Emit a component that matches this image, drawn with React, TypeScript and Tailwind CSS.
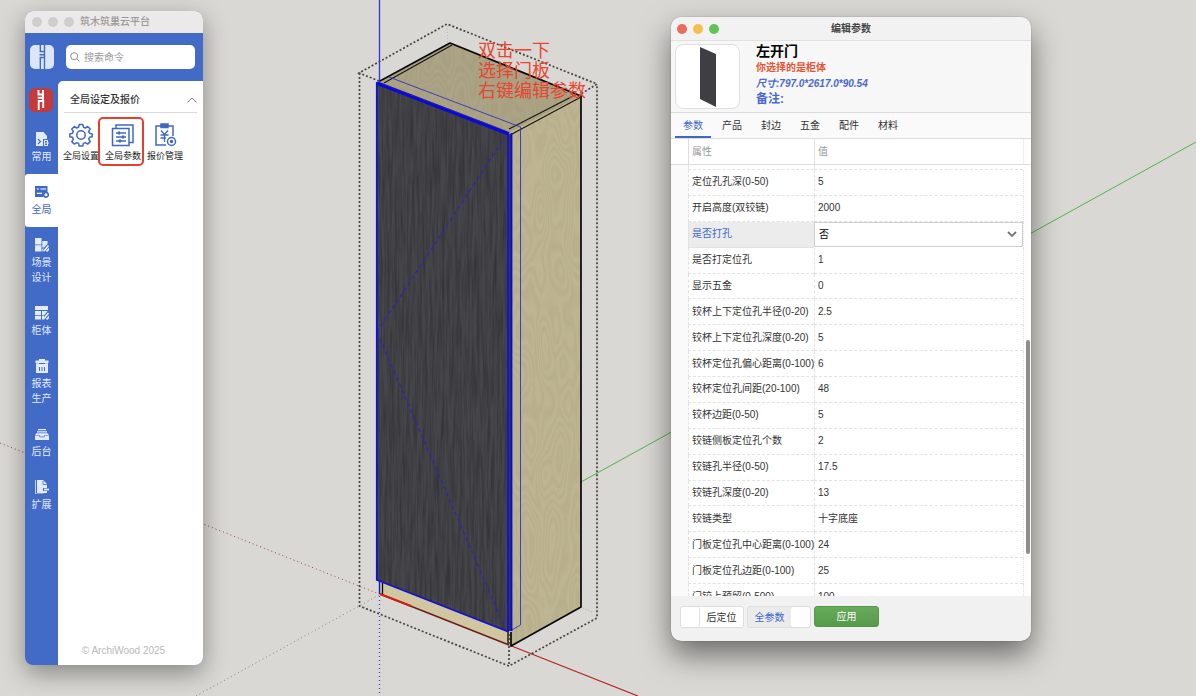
import type { ReactNode } from "react";

const FONT = "font-['Liberation_Sans','Noto_Sans_CJK_SC',sans-serif]";

function Scene() {
  return (
    <svg
      className="absolute inset-0 h-full w-full"
      viewBox="0 0 1196 696"
      preserveAspectRatio="xMinYMin slice"
      fill="none"
      aria-hidden="true"
    >
      <defs>
        <filter id="doorGrain" x="0" y="0" width="1" height="1" colorInterpolationFilters="sRGB">
          <feTurbulence type="fractalNoise" baseFrequency="0.4 0.02" numOctaves="3" seed="4" />
          <feColorMatrix values="0 0 0 0 0.12  0 0 0 0 0.12  0 0 0 0 0.14  0.9 0 0 0 -0.3" />
        </filter>
        <filter id="woodGrain" x="0" y="0" width="1" height="1" colorInterpolationFilters="sRGB">
          <feTurbulence type="fractalNoise" baseFrequency="0.035 0.011" numOctaves="2" seed="9" />
          <feComponentTransfer>
            <feFuncR type="table" tableValues="0 1 0 1 0 1 0 1 0 1 0 1 0 1 0 1 0 1 0 1 0 1 0 1 0 1 0 1 0" />
          </feComponentTransfer>
          <feColorMatrix values="0 0 0 0 0.5  0 0 0 0 0.45  0 0 0 0 0.3  0.11 0 0 0 0" />
        </filter>
        <clipPath id="doorClip">
          <path d="M377 83 509 133V632L377 580Z" />
        </clipPath>
        <clipPath id="woodClip">
          <path d="M380 82 450 43 581 96V607L511 646 509 133Z" />
        </clipPath>
      </defs>

      <path d="M379.500 0V82" stroke="#3232f0" strokeWidth="1.300" />
      <path d="M379.500 596V696" stroke="#4444d0" strokeWidth="1.300" strokeDasharray="1 3" />
      <path d="M1196 142 581 482" stroke="#4cb748" />
      <path d="M196 696 379 595" stroke="#7c8f62" strokeDasharray="1 3" />
      <path d="M0 443 379 594" stroke="#a03a3a" strokeDasharray="1 3" />
      <path d="M509 645 638 696" stroke="#b3241c" strokeWidth="1.200" />

      <path d="M380 582V594L511 646V632Z" fill="#d0c6a0" />
      <path d="M380 82 450 43 581 96 509 133Z" fill="#aca486" />
      <path d="M509 133 581 96V607L511 646Z" fill="#beb593" />
      <g clipPath="url(#woodClip)">
        <rect x="380" y="43" width="201" height="604" filter="url(#woodGrain)" />
      </g>
      <path d="M377 83 509 133V632L377 580Z" fill="#464549" />
      <g clipPath="url(#doorClip)">
        <rect x="377" y="83" width="132" height="549" filter="url(#doorGrain)" />
      </g>

      <path d="M380 81 450 43 581 96V607L511 646V632" stroke="#080808" strokeWidth="1.700" strokeLinejoin="round" />
      <path d="M384 83 452 45M509 129 577 94M512 134 581 97" stroke="#151510" strokeWidth="1.100" />
      <path d="M382.500 583V594M508 632V645" stroke="#080808" strokeWidth="1.300" />
      <path d="M380 594 509 645" stroke="#6d1b14" strokeWidth="1.400" />
      <path d="M380 594 411 606" stroke="#d01c14" strokeWidth="2" />
      <path d="M379.500 581V594" stroke="#1414e0" strokeWidth="1.400" />

      <path d="M389 77 520.500 127V625L510 631" stroke="#3030c8" strokeWidth="0.900" />
      <path d="M377 332 505 137M377 332 505 628" stroke="#2a22c4" strokeWidth="1.200" strokeDasharray="4 3" />
      <path d="M377 83 509 134" stroke="#0a0ad8" strokeWidth="3.500" />
      <path d="M383 84 506 131" stroke="#30307c" strokeWidth="1" strokeDasharray="2 1" />
      <path d="M376.800 82V580L509 632" stroke="#1010dc" strokeWidth="1.800" />
      <path d="M510 134V631" stroke="#30306a" strokeWidth="3" />
      <path d="M508 133V631" stroke="#1010d8" strokeWidth="1.600" />
      <path d="M511.500 133V631" stroke="#0a0ad0" strokeWidth="1.800" />

      <g stroke="#45443f" strokeWidth="1.700" strokeDasharray="2 2">
        <path d="M379 81 359 73 447 24 597 84 581 94" />
        <path d="M359.500 73V606L509 666 597 618V84" />
        <path d="M509 634V666" />
      </g>
      <path d="M447.500 26V43" stroke="#b5b3ad" strokeWidth="0.800" strokeDasharray="1 2" />
      <path d="M583 608 592 612" stroke="#9fb09a" strokeWidth="0.800" strokeDasharray="1 2" />
    </svg>
  );
}

function WhiteMark() {
  return (
    <svg className="size-6" viewBox="0 0 24 24" fill="none" aria-hidden="true">
      <rect width="24" height="24" rx="5" fill="#dce6fa" />
      <path d="M10.300 0V6.500H14.500V0M14.500 6V12.500M9.500 9.700H14.500M10.300 24V12.500H14.500V24" stroke="#426ac7" strokeWidth="1.400" />
    </svg>
  );
}

function RedMark() {
  return (
    <svg className="size-6" viewBox="0 0 24 24" fill="none" aria-hidden="true">
      <rect width="24" height="24" rx="6" fill="#c63a3c" />
      <path d="M9.500 2V6.500H14V2M14 6V13M8.700 9.700H14M9.700 22V13H14.200V20" stroke="#fff" strokeWidth="1.900" />
    </svg>
  );
}

const sideIcons: Record<string, ReactNode> = {
  common: (
    <>
      <path d="M1 0H8.500L12 4V7H8V14H1Z" fill="currentColor" />
      <path d="M3 7 5.500 9.500 3 12" stroke="#426ac7" strokeWidth="1.100" />
      <path d="M9.500 8V14M9.500 8.500H12.500M9.500 11H14M9.500 13.500H12.500M12.500 8V14" stroke="currentColor" />
    </>
  ),
  global: (
    <>
      <path d="M0 1H12.500V7H9L8 12H0Z" fill="currentColor" />
      <path d="M1.800 4H3.800M5.500 4H11M1.800 8.300H7" stroke="#fff" strokeWidth="1.200" />
      <circle cx="11" cy="9.800" r="2.300" stroke="currentColor" strokeWidth="1.600" fill="#fff" />
    </>
  ),
  scene: (
    <>
      <path d="M0 0H6.500V6.500H0ZM0 7.200H6.500V13.500H0ZM7.300 3H12.500V6L9 9.500H7.300ZM7.300 13.500V10.500H8.500V13.500Z" fill="currentColor" />
      <path d="M9 13 13.500 7.500M11.500 13.500 14.500 10.500" stroke="currentColor" strokeWidth="1.800" />
    </>
  ),
  cabinet: (
    <>
      <path d="M0 0H13V4H0ZM0 5H6V9H0ZM0 9.800H6V13.500H0ZM7 5H12.500L9.500 9H7ZM7 13.500V9.800L9 9.500V13.500Z" fill="currentColor" />
      <path d="M8.500 13 13.500 7M11.500 13.500 14.500 10.500" stroke="currentColor" strokeWidth="1.800" />
    </>
  ),
  report: (
    <>
      <path d="M4 0H10V1.500H13.500V4H.500V1.500H4ZM1 4.300H13V14H1Z" fill="currentColor" />
      <path d="M4 4.500H10M4.500 8V12M7 8V12M9.500 8V12" stroke="#426ac7" strokeWidth="1" />
    </>
  ),
  backend: (
    <path
      d="M3 2H11V3.200H3ZM2 4.200H12V5.400H2ZM1.500 6.300H12.500L14 8H9.500L9 9.500H5L4.500 8H0ZM0 8.500H4L4.700 10.300H9.300L10 8.500H14V13H0Z"
      fill="currentColor"
    />
  ),
  extend: (
    <>
      <path d="M2 0H8L12 4V8H8V11H12V13H2Z" fill="currentColor" />
      <path d="M.500 0V14H9" stroke="currentColor" strokeWidth=".800" />
      <path d="M8 1V4.500H12" stroke="#426ac7" strokeWidth=".800" />
      <path d="M9 9.500H14.500" stroke="currentColor" strokeWidth="1.800" />
    </>
  ),
};

const sideItems = [
  { id: "common", lines: ["常用"] },
  { id: "global", lines: ["全局"], active: true },
  { id: "scene", lines: ["场景", "设计"] },
  { id: "cabinet", lines: ["柜体"] },
  { id: "report", lines: ["报表", "生产"] },
  { id: "backend", lines: ["后台"] },
  { id: "extend", lines: ["扩展"] },
];

function GearIcon() {
  return (
    <svg className="size-6" viewBox="0 0 24 24" fill="none" stroke="#3f68c5" strokeWidth="1.500" strokeLinejoin="round" aria-hidden="true">
      <path d="M10.200 1.500h3.600l.6 2.700 1.900.8 2.400-1.500 2.500 2.500-1.500 2.400.8 1.900 2.700.6v2.800l-2.700.6-.8 1.900 1.500 2.400-2.500 2.500-2.400-1.500-1.900.8-.6 2.700h-3.600l-.6-2.700-1.900-.8-2.400 1.500-2.500-2.500 1.500-2.400-.8-1.900-2.700-.6v-2.800l2.700-.6.8-1.900-1.500-2.400 2.500-2.500 2.400 1.500 1.900-.8z" />
      <circle cx="12" cy="12" r="4.200" />
    </svg>
  );
}

function SlidersIcon() {
  return (
    <svg className="size-6" viewBox="0 0 24 24" fill="none" stroke="#3f68c5" strokeWidth="1.500" aria-hidden="true">
      <path d="M1.500 5.500H18V22.500H1.500ZM5 5V2H22V19.500H18.500" />
      <path d="M5 10H15M5 14H15M5 18H15" />
      <path d="M8 8.500V11.500M12 12.500V15.500M9 16.500V19.500" strokeWidth="2.200" />
    </svg>
  );
}

function QuoteIcon() {
  return (
    <svg className="size-6" viewBox="0 0 24 24" fill="none" stroke="#3f68c5" strokeWidth="1.500" aria-hidden="true">
      <path d="M13 22H3V3H20V13" />
      <path d="M8 1H15V4.500H8Z" fill="#3f68c5" />
      <path d="M8 7.500 11.500 11.500 15 7.500M7.500 12H15.500M7.500 15H13M11.500 11.500V19" strokeWidth="1.300" />
      <circle cx="18.500" cy="18.500" r="4" fill="#fff" />
      <circle cx="18.500" cy="18.500" r="1" fill="#3f68c5" />
    </svg>
  );
}

const tools = [
  { label: "全局设置", icon: <GearIcon /> },
  { label: "全局参数", icon: <SlidersIcon />, marked: true },
  { label: "报价管理", icon: <QuoteIcon /> },
];

function PlatformWindow() {
  return (
    <section className="absolute top-[11px] left-[25px] flex h-[654px] w-[178px] flex-col overflow-hidden rounded-lg bg-[#426ac7] shadow-[0_8px_24px_rgba(0,0,0,0.38)]">
      <header className="flex h-[22px] shrink-0 items-center gap-[6px] bg-[#ebe9e9] px-[7px]">
        <span className="size-[10px] rounded-full bg-[#cfcdcd]" />
        <span className="size-[10px] rounded-full bg-[#cfcdcd]" />
        <span className="size-[10px] rounded-full bg-[#cfcdcd]" />
        <h1 className="text-[10px] leading-4 font-medium text-[#9b9999]">筑木筑巢云平台</h1>
      </header>
      <div className="flex h-12 shrink-0 items-center pr-2">
        <div className="flex w-[33px] shrink-0 justify-center">
          <WhiteMark />
        </div>
        <label className="ml-2 flex h-6 min-w-0 flex-1 items-center gap-1 rounded-[5px] bg-white px-1">
          <svg className="size-[10px] shrink-0" viewBox="0 0 10 10" fill="none" stroke="#8c8c8c" aria-hidden="true">
            <circle cx="4.200" cy="4.200" r="3.500" />
            <path d="m6.800 6.800 2.700 2.700" />
          </svg>
          <input
            type="text"
            aria-label="搜索命令"
            placeholder="搜索命令"
            className="min-w-0 flex-1 bg-transparent pt-[2px] text-[10px] leading-4 outline-none placeholder:text-[#9a9a9a]"
          />
        </label>
      </div>
      <div className="flex min-h-0 flex-1">
        <nav className="flex w-[33px] shrink-0 flex-col text-[#e3ecff]">
          <button type="button" aria-label="ArchiWood" className="flex h-10 items-start justify-center pt-[7px] pr-[2px]">
            <RedMark />
          </button>
          {sideItems.map((item) => (
            <button
              key={item.id}
              type="button"
              className={
                item.active
                  ? "flex flex-col items-center gap-[3px] rounded-l-[3px] bg-white pt-[11px] pb-[10px] text-[#3f68c5]"
                  : "flex flex-col items-center gap-[3px] pt-[11px] pb-[10px]"
              }
            >
              <svg className="size-[14px]" viewBox="0 0 14 14" fill="none" aria-hidden="true">
                {sideIcons[item.id]}
              </svg>
              <span className="flex flex-col text-[10px] leading-[15px]">
                {item.lines.map((line) => (
                  <span key={line}>{line}</span>
                ))}
              </span>
            </button>
          ))}
        </nav>
        <div className="flex min-w-0 flex-1 flex-col rounded-tl-[5px] bg-white">
          <button type="button" className="mx-[6px] flex h-8 items-center justify-between border-b border-[#d9d9d9] pt-[6px] pl-[6px] text-[#333]">
            <span className="text-[10px] leading-4 font-medium">全局设定及报价</span>
            <svg className="h-[6px] w-[10px]" viewBox="0 0 10 6" fill="none" stroke="#777" aria-hidden="true">
              <path d="m.500 5.500 4.500-4.500 4.500 4.500" />
            </svg>
          </button>
          <div className="flex px-[2px] pt-[10px]">
            {tools.map((tool) => (
              <button key={tool.label} type="button" className="relative flex w-[42px] flex-col items-center gap-[3px]">
                {tool.icon}
                <span className="text-[9px] leading-3 whitespace-nowrap text-[#222]">{tool.label}</span>
                {tool.marked && (
                  <span className="absolute -top-[6px] right-0 -left-1 h-[49px] rounded-[5px] border-2 border-[#e6402d]" />
                )}
              </button>
            ))}
          </div>
          <footer className="mt-auto pr-[14px] pb-[6px] text-center text-[10px] leading-4 text-[#b9b9b9]">
            © ArchiWood 2025
          </footer>
        </div>
      </div>
    </section>
  );
}

const rows: { name: string; value: string; select?: boolean }[] = [
  { name: "定位孔孔深(0-50)", value: "5" },
  { name: "开启高度(双铰链)", value: "2000" },
  { name: "是否打孔", value: "否", select: true },
  { name: "是否打定位孔", value: "1" },
  { name: "显示五金", value: "0" },
  { name: "铰杯上下定位孔半径(0-20)", value: "2.5" },
  { name: "铰杯上下定位孔深度(0-20)", value: "5" },
  { name: "铰杯定位孔偏心距离(0-100)", value: "6" },
  { name: "铰杯定位孔间距(20-100)", value: "48" },
  { name: "铰杯边距(0-50)", value: "5" },
  { name: "铰链侧板定位孔个数", value: "2" },
  { name: "铰链孔半径(0-50)", value: "17.5" },
  { name: "铰链孔深度(0-20)", value: "13" },
  { name: "铰链类型", value: "十字底座" },
  { name: "门板定位孔中心距离(0-100)", value: "24" },
  { name: "门板定位孔边距(0-100)", value: "25" },
  { name: "门铰上预留(0-500)", value: "100" },
];

const tabs = ["参数", "产品", "封边", "五金", "配件", "材料"];

function ParameterRow({ name, value, select }: { name: string; value: string; select?: boolean }) {
  return (
    <tr>
      <td className="bg-[#fafafa] p-0" />
      <th
        scope="row"
        className={
          select
            ? "border-b border-l border-[#e2e2e2] bg-[#ececec] py-0 pr-0 pl-[3px] text-left font-normal whitespace-nowrap text-[#4068c8]"
            : "border-b border-l border-dashed border-[#e2e2e2] py-0 pr-0 pl-[3px] text-left font-normal whitespace-nowrap"
        }
      >
        {name}
      </th>
      {select ? (
        <td className="p-0">
          <div className="relative">
            <select
              aria-label={name}
              defaultValue={value}
              className="block h-[25px] w-full appearance-none border border-[#cfcfcf] bg-white pl-1 text-black"
            >
              <option>否</option>
              <option>是</option>
            </select>
            <svg className="pointer-events-none absolute top-[9px] right-[6px] h-[7px] w-[10px]" viewBox="0 0 10 7" fill="none" stroke="#777" strokeWidth="1.800" aria-hidden="true">
              <path d="m1 1 4 4 4-4" />
            </svg>
          </div>
        </td>
      ) : (
        <td className="border-b border-l border-dashed border-[#e2e2e2] py-0 pl-[3px]">{value}</td>
      )}
      <td className="border-l border-dotted border-[#e2e2e2] p-0" />
    </tr>
  );
}

function ParameterWindow() {
  return (
    <section className="absolute top-[17px] left-[671px] flex h-[624px] w-[360px] flex-col overflow-hidden rounded-[10px] bg-[#f1f1f1] text-[10px] text-[#333] shadow-[0_0_1px_rgba(0,0,0,0.6),0_14px_30px_rgba(0,0,0,0.5)]">
      <header className="flex h-6 shrink-0 items-center border-b border-[#e1e1e1] bg-[#f3f2f2] px-[6px]">
        <div className="flex flex-1 gap-[6px]">
          <button type="button" aria-label="关闭" className="size-[10px] rounded-full bg-[#ec6a5e]" />
          <button type="button" aria-label="最小化" className="size-[10px] rounded-full bg-[#f4bf4f]" />
          <button type="button" aria-label="缩放" className="size-[10px] rounded-full bg-[#61c554]" />
        </div>
        <h2 className="leading-4 font-bold text-[#444]">编辑参数</h2>
        <div className="flex-1" />
      </header>
      <div className="flex h-[72px] shrink-0 gap-4 border-b border-[#dcdcdc] bg-[#f7f7f7] px-1 pt-[3px]">
        <div className="flex size-[65px] items-center justify-center rounded-[8px] border border-[#e0e0e0] bg-white">
          <svg className="h-[60px] w-4" viewBox="0 0 16 60" aria-hidden="true">
            <path d="M0 0 16 7V60L0 52Z" fill="#3f3e43" />
          </svg>
        </div>
        <div className="flex flex-col font-bold">
          <h3 className="text-[14px] leading-[15px] text-black">左开门</h3>
          <p className="leading-[18px] text-[#ea5230]">你选择的是柜体</p>
          <p className="leading-[14px] text-[#4a69cc] italic">尺寸:797.0*2617.0*90.54</p>
          <p className="text-[12px] leading-[17px] text-[#4a69cc]">备注:</p>
        </div>
      </div>
      <div role="tablist" className="flex h-[26px] shrink-0 gap-[3px] border-b border-[#dcdcdc] bg-[#fafafa] px-1">
        {tabs.map((tab, i) => (
          <button
            key={tab}
            type="button"
            role="tab"
            aria-selected={i === 0}
            className={
              i === 0
                ? "w-9 border-b-2 border-[#4068c0] pt-[2px] text-[#4068c8]"
                : "w-9 border-b-2 border-transparent pt-[2px]"
            }
          >
            {tab}
          </button>
        ))}
      </div>
      <div className="relative min-h-0 flex-1 overflow-hidden bg-white">
        <table className="h-[471px] w-full table-fixed border-separate border-spacing-0 leading-6">
          <colgroup>
            <col className="w-[17px]" />
            <col className="w-[126px]" />
            <col />
            <col className="w-[8px]" />
          </colgroup>
          <thead>
            <tr className="h-[26px] text-left text-[#999]">
              <td className="border-b border-[#dcdcdc] p-0" />
              <th scope="col" className="border-b border-l border-[#dcdcdc] py-0 pl-[3px] font-normal">属性</th>
              <th scope="col" className="border-b border-l border-[#e2e2e2] border-b-[#dcdcdc] py-0 pl-[3px] font-normal">值</th>
              <td className="border-b border-l border-[#eeeeee] border-b-[#dcdcdc] p-0" />
            </tr>
            <tr className="h-[5px]">
              <td className="h-[5px] bg-[#fafafa] p-0" />
              <td className="h-[5px] border-b border-l border-dashed border-[#e2e2e2] p-0" />
              <td className="h-[5px] border-b border-l border-dashed border-[#e2e2e2] p-0" />
              <td className="h-[5px] p-0" />
            </tr>
          </thead>
          <tbody>
            {rows.map((row) => (
              <ParameterRow key={row.name} name={row.name} value={row.value} select={row.select} />
            ))}
          </tbody>
        </table>
        <span className="absolute top-[201px] right-[1px] h-[214px] w-1 rounded-[2px] bg-[#8d8d8d]" />
      </div>
      <footer className="flex h-[45px] shrink-0 items-start gap-[3px] px-[9px] pt-[10px]">
        <button type="button" role="switch" aria-checked="false" className="flex h-[22px] w-16 rounded-[3px] border border-[#dedede] bg-white">
          <span className="h-full w-[19px] rounded-[3px] border-r border-[#dedede]" />
          <span className="flex h-full flex-1 items-center justify-center">后定位</span>
        </button>
        <button type="button" role="switch" aria-checked="true" className="flex h-[22px] w-16 rounded-[3px] border border-[#dedede] bg-[#ebebeb] text-[#4068c8]">
          <span className="flex h-full flex-1 items-center justify-center">全参数</span>
          <span className="h-full w-[19px] rounded-[3px] bg-white" />
        </button>
        <button type="button" className="h-[21px] w-[65px] rounded-[3px] border border-[#55944a] bg-linear-to-b from-[#68ab5b] to-[#559b49] text-white">
          应用
        </button>
      </footer>
    </section>
  );
}

export default function App() {
  return (
    <main className={`relative h-screen w-full overflow-hidden bg-[#d9d8d4] ${FONT}`}>
      <Scene />
      <p className="absolute top-[41px] left-[478px] text-[18px] leading-5 text-[#e6452f]">
        双击一下
        <br />
        选择门板
        <br />
        右键编辑参数
      </p>
      <PlatformWindow />
      <ParameterWindow />
    </main>
  );
}
